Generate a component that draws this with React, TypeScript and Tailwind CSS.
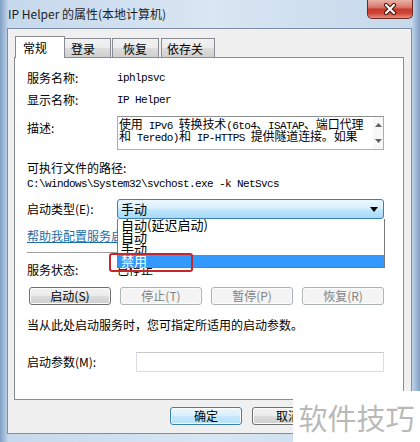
import type { ReactNode } from 'react';

// SimSun-like Latin run (6px per char)
function M({ children }: { children: ReactNode }) {
    return <span className="font-['Liberation_Mono',monospace] text-[11px] tracking-[-0.6px]">{children}</span>;
}

function Btn({ label, disabled, focused, w = 'w-[82px]' }: { label: string; disabled?: boolean; focused?: boolean; w?: string }) {
    let look = 'border-[#707070] bg-[linear-gradient(#f2f2f2,#ebebeb_50%,#dddddd_50%,#cfcfcf)] text-black';
    if (disabled) look = 'border-[#adb2b5] bg-[#f4f4f4] text-[#838383]';
    if (focused) look = 'border-[#3c7fb1] bg-[linear-gradient(#eaf6fd,#d9f0fc_50%,#c6e8fb_50%,#b5e0f8)] text-black';
    return (
        <div className={`${w} h-[18px] flex items-center justify-center rounded-[3px] border shadow-[inset_0_0_0_1px_#fcfcfc] text-[12px] leading-[14px] ${look}`}>
            {label}
        </div>
    );
}

export default function App() {
    return (
        <div className="relative w-[420px] h-[442px] overflow-hidden bg-[linear-gradient(90deg,#7f9fc4,#c6d8ec_2%,#d9e6f3_50%,#c6d8ec_98%,#7f9fc4)] font-['Noto_Sans_CJK_SC','Liberation_Sans',sans-serif] text-[12px] text-black">
            {/* Title bar */}
            <div className="flex h-[28px] items-start justify-between pl-[8px] pr-[7px]">
                <span className="mt-[6px] leading-[16px] text-[12px] text-[#1e1e1e]">IP Helper 的属性(本地计算机)</span>
                <div className="w-[46px] h-[19px] rounded-b-[5px] border border-t-0 border-[#6b2920] bg-[linear-gradient(#eab1a8,#d9786c_40%,#c8392b_52%,#d0473a_75%,#e39183)] flex items-center justify-center">
                    <svg width="14" height="12" viewBox="0 0 14 12">
                        <path d="M3 2 L11 10 M11 2 L3 10" stroke="#43130c" strokeWidth="4.2" strokeLinecap="round" />
                        <path d="M3 2 L11 10 M11 2 L3 10" stroke="#ffffff" strokeWidth="2.2" strokeLinecap="round" />
                    </svg>
                </div>
            </div>

            {/* Dialog body */}
            <div className="ml-[7px] w-[405px] h-[406px] flex flex-col border border-[#7b8ea5] bg-[#f0f0f0] pt-[7px]">
                {/* Tabs */}
                <div className="ml-[6px] flex h-[21px] items-end">
                    <div className="relative z-10 ml-[1px] -mb-px w-[50px] h-[22px] border border-b-0 border-[#898c95] bg-white pl-[7px] pt-[3px] leading-[16px]">常规</div>
                    <div className="w-[46px] h-[19px] border border-b-0 border-l-0 border-[#898c95] bg-[linear-gradient(#f2f2f2,#ebebeb_50%,#dddddd_50%,#cfcfcf)] pl-[6px] pt-[2px] leading-[15px]">登录</div>
                    <div className="ml-[1px] w-[47px] h-[19px] border border-b-0 border-[#898c95] bg-[linear-gradient(#f2f2f2,#ebebeb_50%,#dddddd_50%,#cfcfcf)] pl-[10px] pt-[2px] leading-[15px]">恢复</div>
                    <div className="ml-[2px] w-[54px] h-[19px] border border-b-0 border-[#898c95] bg-[linear-gradient(#f2f2f2,#ebebeb_50%,#dddddd_50%,#cfcfcf)] pl-[5px] pt-[2px] leading-[15px]">依存关系</div>
                </div>

                {/* Tab panel */}
                <div className="ml-[6px] w-[390px] h-[343px] border border-[#898c95] bg-white flex flex-col">
                    <div className="mt-[12px] ml-[12px] flex h-[16px] items-center">
                        <span className="w-[90px]">服务名称:</span>
                        <M>iphlpsvc</M>
                    </div>
                    <div className="mt-[6px] ml-[12px] flex h-[16px] items-center">
                        <span className="w-[90px]">显示名称:</span>
                        <M>IP Helper</M>
                    </div>
                    <div className="mt-[8px] ml-[12px] flex h-[34px]">
                        <span className="w-[90px] pt-[4px] leading-[16px]">描述:</span>
                        <div className="w-[267px] flex border border-[#abadb3] border-t-[#8e8f8f] bg-white">
                            <div className="flex-1 whitespace-nowrap pl-[1px] pt-[1px] text-[12px] tracking-[-0.15px]">
                                <div className="h-[12px] leading-[12px]">使用<M> IPv6 </M>转换技术<M>(6to4</M>、<M>ISATAP</M>、端口代理</div>
                                <div className="h-[12px] leading-[12px]">和<M> Teredo)</M>和<M> IP-HTTPS </M>提供隧道连接。如果</div>
                            </div>
                            <div className="w-[10px] flex flex-col items-center justify-between py-[6px] bg-[#f7f7f7]">
                                <svg width="7" height="4" viewBox="0 0 7 4"><path d="M0 4 L3.5 0 L7 4 Z" fill="#606060" /></svg>
                                <svg width="7" height="4" viewBox="0 0 7 4"><path d="M0 0 L3.5 4 L7 0 Z" fill="#606060" /></svg>
                            </div>
                        </div>
                    </div>
                    <div className="mt-[10px] ml-[12px] h-[16px] leading-[16px]">可执行文件的路径:</div>
                    <div className="ml-[12px] h-[16px] flex items-center">
                        <M>{"C:\\windows\\System32\\svchost.exe -k NetSvcs"}</M>
                    </div>
                    <div className="mt-[7px] ml-[12px] flex h-[20px] items-center">
                        <span className="w-[90px]">启动类型(E):</span>
                        <div className="relative z-20 w-[267px] h-[20px] flex items-center justify-between rounded-[3px] border border-[#3c7fb1] bg-[linear-gradient(#eaf6fd,#d9f0fc_45%,#bee6fd_55%,#a7d9f5)] pl-[3px] pr-[5px]">
                            <span className="text-[13px] leading-[16px]">手动</span>
                            <svg width="8" height="5" viewBox="0 0 8 5"><path d="M0 0 L8 0 L4 5 Z" fill="#000" /></svg>
                            {/* Open list */}
                            <div className="absolute left-[-1px] top-[19px] w-[268px] border border-t-0 border-[#7a7a7a] bg-white text-[13px]">
                                <div className="h-[12px] leading-[11px] pl-[3px] whitespace-nowrap">自动(延迟启动)</div>
                                <div className="h-[12px] leading-[11px] pl-[3px]">自动</div>
                                <div className="h-[12px] leading-[11px] pl-[3px]">手动</div>
                                <div className="relative h-[12px] leading-[11px] pl-[3px] bg-[#3399ff] text-white">禁用</div>
                            </div>
                        </div>
                    </div>
                    <div className="mt-[9px] ml-[12px] h-[16px] leading-[16px] text-[#1a6fa8] underline whitespace-nowrap">帮助我配置服务启动选项。</div>
                    <div className="mt-[8px] ml-[12px] w-[358px] h-[2px] border-t border-[#a0a0a0] border-b border-b-white" />
                    <div className="mt-[8px] ml-[12px] flex h-[16px] items-center">
                        <span className="w-[90px]">服务状态:</span>
                        <span>已停止</span>
                    </div>
                    <div className="mt-[9px] ml-[14px] flex gap-[9px]">
                        <Btn label="启动(S)" />
                        <Btn label="停止(T)" disabled />
                        <Btn label="暂停(P)" disabled />
                        <Btn label="恢复(R)" disabled />
                    </div>
                    <div className="mt-[12px] ml-[12px] h-[16px] leading-[16px]">当从此处启动服务时，您可指定所适用的启动参数。</div>
                    <div className="mt-[19px] ml-[12px] flex h-[20px] items-center">
                        <span className="w-[109px]">启动参数(M):</span>
                        <div className="w-[248px] h-[20px] border border-[#d9dbe0] border-t-[#c5c7cc] bg-white" />
                    </div>
                </div>

                {/* Dialog buttons */}
                <div className="mt-[7px] ml-[162px] flex gap-[10px]">
                    <Btn label="确定" focused w="w-[72px]" />
                    <Btn label="取消" w="w-[72px]" />
                    <Btn label="应用(A)" disabled w="w-[72px]" />
                </div>
            </div>

            {/* Red highlight */}
            <div className="absolute left-[109px] top-[253px] w-[84px] h-[19px] rounded-[3px] border-2 border-[#c4262c] z-30" />

            {/* Watermark */}
            <div className="absolute right-0 bottom-0 w-[127px] h-[51px] bg-white z-40 flex items-center justify-center">
                <span className="text-[29px] leading-[34px] text-[#b9b9b9] whitespace-nowrap">软件技巧</span>
            </div>
        </div>
    );
}
